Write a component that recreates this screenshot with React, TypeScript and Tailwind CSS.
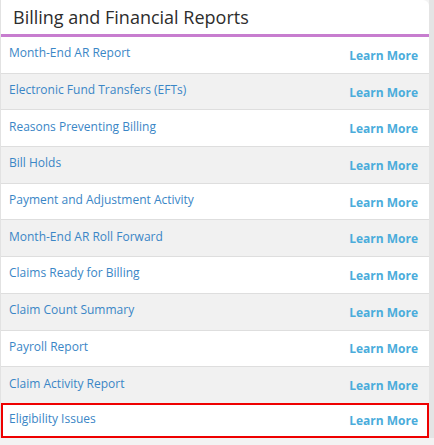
const REPORTS = [
  'Month-End AR Report',
  'Electronic Fund Transfers (EFTs)',
  'Reasons Preventing Billing',
  'Bill Holds',
  'Payment and Adjustment Activity',
  'Month-End AR Roll Forward',
  'Claims Ready for Billing',
  'Claim Count Summary',
  'Payroll Report',
  'Claim Activity Report',
  'Eligibility Issues',
];

export default function App() {
  return (
    <div className="w-[434px] h-[445px] bg-[#f3f3f3] overflow-hidden" style={{ fontFamily: '"Open Sans", sans-serif' }}>
      <div className="flex">
        {/* Card */}
        <div className="w-[429px] bg-white border-l border-[#e2e2e2] rounded-tr-md">
          <div className="h-[37px] border-b-[3px] border-[#c77dcf] pl-3 pt-[3px]">
            <h2 className="text-[18px] leading-[28px] text-[#2d2d2d]">Billing and Financial Reports</h2>
          </div>
          {REPORTS.map((name, i) => {
            const last = i === REPORTS.length - 1;
            return (
              <div
                key={name}
                className={
                  last
                    ? 'h-[35px] mt-[-1px] flex items-center justify-between pl-[6px] pr-[9px] bg-white border-2 border-[#ee0000]'
                    : `h-[36.7px] flex items-center justify-between pl-2 pr-[11px] border-b border-[#dedede] ${i % 2 === 1 ? 'bg-[#f1f1f1]' : 'bg-white'}`
                }
              >
                <span className="text-[12px] text-[#3a86c6] -mt-[3px]">{name}</span>
                <a className="text-[12px] font-bold text-[#4aacdb] mt-[2px]">Learn More</a>
              </div>
            );
          })}
        </div>
        {/* right shadow strip */}
        <div className="w-[5px] bg-[#e4e4e4]" />
      </div>
    </div>
  );
}
